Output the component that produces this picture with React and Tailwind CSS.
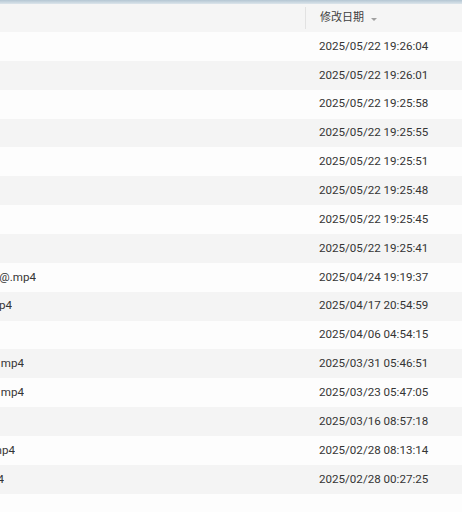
import React from "react";

const rows = [
  { d: "2025/05/22 19:26:04" },
  { d: "2025/05/22 19:26:01" },
  { d: "2025/05/22 19:25:58" },
  { d: "2025/05/22 19:25:55" },
  { d: "2025/05/22 19:25:51" },
  { d: "2025/05/22 19:25:48" },
  { d: "2025/05/22 19:25:45" },
  { d: "2025/05/22 19:25:41" },
  { d: "2025/04/24 19:19:37", n: "@.mp4", w: "w-[36px]" },
  { d: "2025/04/17 20:54:59", n: "mp4", w: "w-[12px]" },
  { d: "2025/04/06 04:54:15" },
  { d: "2025/03/31 05:46:51", n: "mp4", w: "w-[24px]" },
  { d: "2025/03/23 05:47:05", n: "mp4", w: "w-[24px]" },
  { d: "2025/03/16 08:57:18" },
  { d: "2025/02/28 08:13:14", n: "mp4", w: "w-[15px]" },
  { d: "2025/02/28 00:27:25", n: "mp4", w: "w-[4px]" },
];

export default function App() {
  return (
    <div
      className="w-[462px] h-[512px] overflow-hidden bg-[#fdfdfd] text-[#353535] flex flex-col"
      style={{ fontFamily: 'Roboto, "Noto Sans CJK SC", sans-serif' }}
    >
      <div className="h-[4px] shrink-0 bg-gradient-to-b from-[#b4c6d3] to-[#dce5eb]" />
      <div className="h-[28px] shrink-0 flex bg-[#f5f5f5]">
        <div className="w-[306px] shrink-0 flex items-center justify-end">
          <div className="w-px h-[22px] bg-[#e2e2e2]" />
        </div>
        <div className="flex items-center pl-[14px] pt-[1px] gap-[7px] text-[11px] text-[#404040]">
          <span>修改日期</span>
          <span className="w-0 h-0 border-l-[3px] border-r-[3px] border-t-[3px] border-l-transparent border-r-transparent border-t-[#a0a0a0] mt-[1px]" />
        </div>
      </div>
      {rows.map((r, i) => (
        <div
          key={i}
          className={`h-[28.87px] shrink-0 flex items-center text-[11.6px] ${
            i % 2 === 0 ? "bg-[#fdfdfd]" : "bg-[#f4f4f4]"
          }`}
        >
          <div className="w-[306px] shrink-0 flex">
            {r.n ? (
              <div className={`${r.w} overflow-hidden flex justify-end whitespace-nowrap`}>
                <span>{r.n}</span>
              </div>
            ) : null}
          </div>
          <div className="pl-[13px] whitespace-nowrap">{r.d}</div>
        </div>
      ))}
    </div>
  );
}
